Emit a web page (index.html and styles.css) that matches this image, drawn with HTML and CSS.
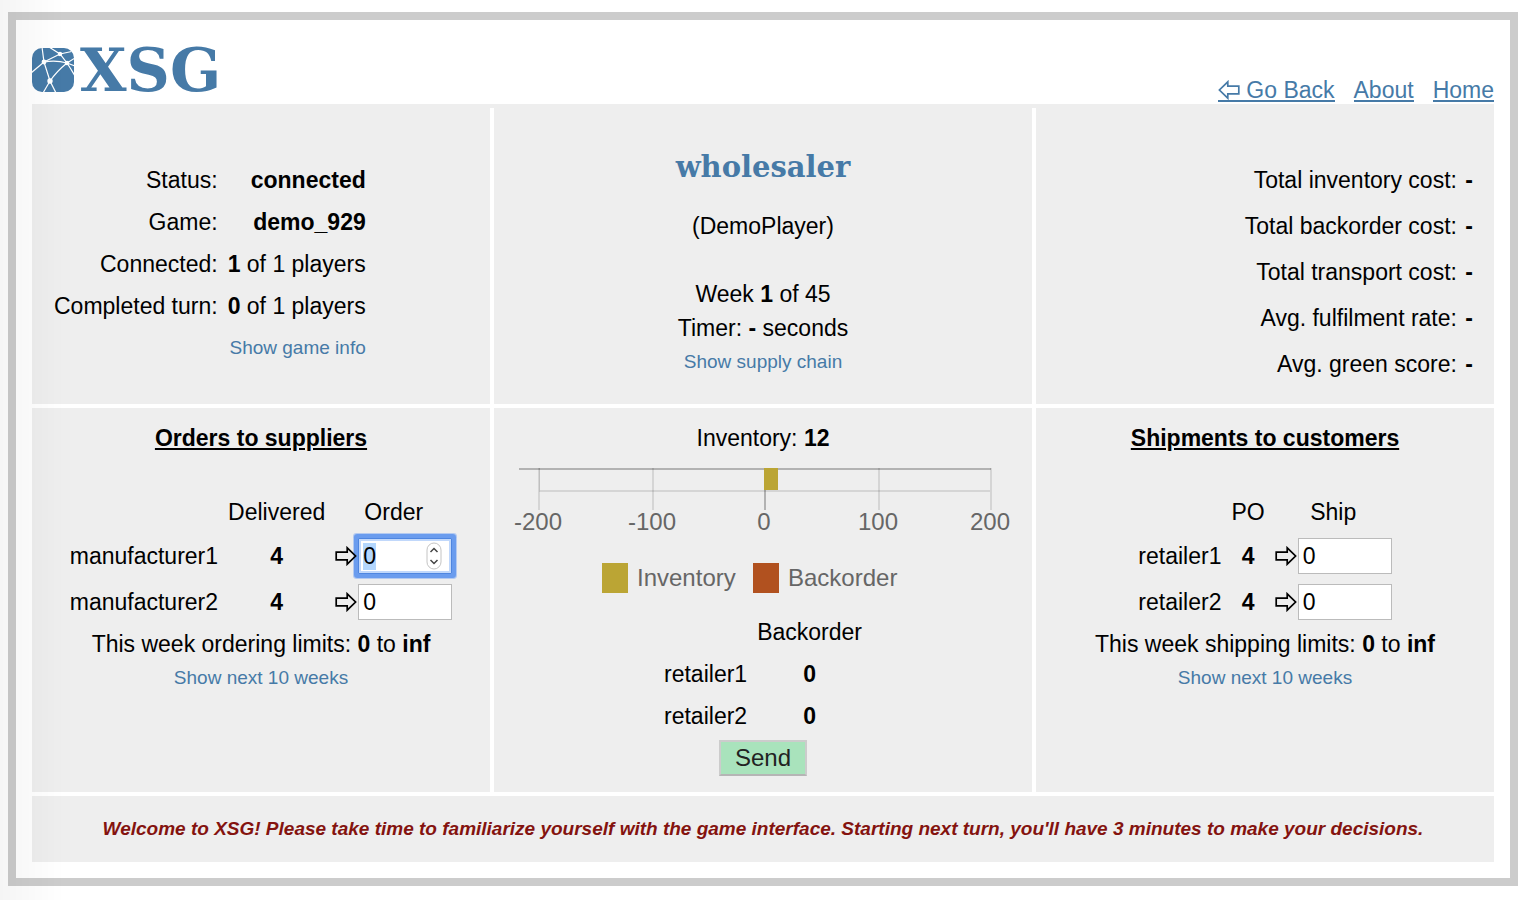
FILE: index.html
```html
<!DOCTYPE html>
<html lang="en">
<head>
<meta charset="utf-8">
<title>XSG</title>
<link rel="stylesheet" href="styles.css">
</head>
<body>
<svg class="defs" aria-hidden="true">
  <symbol id="arrow" viewBox="0 0 22 20"><path d="M1.2 6.2H12.2V1.8L20.6 10L12.2 18.2V13.8H1.2Z" fill="none" stroke="currentColor" stroke-width="1.7"/></symbol>
</svg>
<div class="frame">
  <header class="header">
    <a class="logo" href="#" aria-label="XSG">
      <svg class="logo-mark" viewBox="0 0 42 44" aria-hidden="true">
        <defs><clipPath id="mark"><rect width="42" height="44" rx="10"/></clipPath></defs>
        <g clip-path="url(#mark)">
          <rect width="42" height="44" fill="#467aa7"/>
          <g fill="none" stroke="#fff" stroke-width="1.2">
            <path d="M10 -1L12 14L18 33"/>
            <path d="M-1 25L12 14L28 6L42 3"/>
            <path d="M12 14Q24 12 35 15L43 18"/>
            <path d="M17 -1L28 6L35 15L43 10"/>
            <path d="M35 15Q25 23 18 33L11 45"/>
            <path d="M35 15Q39 21 43 28"/>
            <path d="M18 33L24 45"/>
          </g>
          <g fill="#fff"><circle cx="12" cy="14" r="2.4"/><circle cx="28" cy="6" r="2.2"/><circle cx="35" cy="15" r="2.3"/><circle cx="18" cy="33" r="2.7"/></g>
        </g>
      </svg>
      <span class="logo-text">XSG</span>
    </a>
    <nav class="nav">
      <a href="#"><svg class="arrow back" aria-hidden="true"><use href="#arrow"/></svg> Go Back</a>
      <a href="#">About</a>
      <a href="#">Home</a>
    </nav>
  </header>

  <main class="board">
    <section class="panel status">
      <table class="status-table">
        <tr><th>Status:</th><td><b>connected</b></td></tr>
        <tr><th>Game:</th><td><b>demo_929</b></td></tr>
        <tr><th>Connected:</th><td><b>1</b> of 1 players</td></tr>
        <tr><th>Completed turn:</th><td><b>0</b> of 1 players</td></tr>
        <tr><td></td><td><a class="more" href="#">Show game info</a></td></tr>
      </table>
    </section>

    <section class="panel role">
      <h1 class="role-name">wholesaler</h1>
      <p class="player">(DemoPlayer)</p>
      <p>Week <b>1</b> of 45</p>
      <p>Timer: <b>-</b> seconds</p>
      <p><a class="more" href="#">Show supply chain</a></p>
    </section>

    <section class="panel costs">
      <p>Total inventory cost: <b>-</b></p>
      <p>Total backorder cost: <b>-</b></p>
      <p>Total transport cost: <b>-</b></p>
      <p>Avg. fulfilment rate: <b>-</b></p>
      <p>Avg. green score: <b>-</b></p>
    </section>

    <section class="panel trade">
      <h2 class="title">Orders to suppliers</h2>
      <table class="trade-table">
        <tr class="head"><td></td><th>Delivered</th><th>Order</th></tr>
        <tr>
          <td><label for="m1">manufacturer1</label></td><td class="num">4</td>
          <td><div class="entry"><svg class="arrow" aria-hidden="true"><use href="#arrow"/></svg><span class="field"><input class="qty" id="m1" type="number" value="0" autofocus><svg class="stepper" viewBox="0 0 16 28" aria-hidden="true"><rect x="1" y="1" width="14" height="26" rx="7" fill="#fff" stroke="#c4c4c4"/><path d="M4.5 10L8 6.5L11.5 10M4.5 18L8 21.5L11.5 18" fill="none" stroke="#444" stroke-width="1.5"/></svg></span></div></td>
        </tr>
        <tr>
          <td><label for="m2">manufacturer2</label></td><td class="num">4</td>
          <td><div class="entry"><svg class="arrow" aria-hidden="true"><use href="#arrow"/></svg><input class="qty" id="m2" type="number" value="0"></div></td>
        </tr>
      </table>
      <p>This week ordering limits: <b>0</b> to <b>inf</b></p>
      <p><a class="more" href="#">Show next 10 weeks</a></p>
    </section>

    <section class="panel stock">
      <p>Inventory: <b>12</b></p>
      <svg class="chart" viewBox="0 0 538 156" role="img" aria-label="Inventory 12, backorder 0">
        <g fill="#000">
          <rect x="25" y="13" width="472" height="2" fill-opacity=".25"/>
          <rect x="46" y="35" width="450" height="2" fill-opacity=".1"/>
          <rect x="44" y="13" width="2" height="42" fill-opacity=".1"/>
          <rect x="45" y="13" width="1" height="24" fill-opacity=".1"/>
          <rect x="158" y="13" width="2" height="42" fill-opacity=".1"/>
          <rect x="270" y="13" width="2" height="42" fill-opacity=".25"/>
          <rect x="384" y="13" width="2" height="42" fill-opacity=".1"/>
          <rect x="496" y="13" width="2" height="42" fill-opacity=".1"/>
        </g>
        <rect x="270" y="13" width="14" height="22" fill="#bba534"/>
        <g class="chart-text" text-anchor="middle">
          <text x="44" y="75">-200</text><text x="158" y="75">-100</text><text x="270" y="75">0</text><text x="384" y="75">100</text><text x="496" y="75">200</text>
        </g>
        <rect x="108" y="108" width="26" height="30" fill="#bba534"/>
        <rect x="259" y="108" width="26" height="30" fill="#b1511f"/>
        <g class="chart-text"><text x="143" y="131">Inventory</text><text x="294" y="131">Backorder</text></g>
      </svg>
      <table class="backorder">
        <tr><td></td><th>Backorder</th></tr>
        <tr><td>retailer1</td><td class="num">0</td></tr>
        <tr><td>retailer2</td><td class="num">0</td></tr>
      </table>
      <button class="send" type="button">Send</button>
    </section>

    <section class="panel trade">
      <h2 class="title">Shipments to customers</h2>
      <table class="trade-table">
        <tr class="head"><td></td><th>PO</th><th>Ship</th></tr>
        <tr>
          <td><label for="r1">retailer1</label></td><td class="num">4</td>
          <td><div class="entry"><svg class="arrow" aria-hidden="true"><use href="#arrow"/></svg><input class="qty" id="r1" type="number" value="0"></div></td>
        </tr>
        <tr>
          <td><label for="r2">retailer2</label></td><td class="num">4</td>
          <td><div class="entry"><svg class="arrow" aria-hidden="true"><use href="#arrow"/></svg><input class="qty" id="r2" type="number" value="0"></div></td>
        </tr>
      </table>
      <p>This week shipping limits: <b>0</b> to <b>inf</b></p>
      <p><a class="more" href="#">Show next 10 weeks</a></p>
    </section>

    <p class="panel message">Welcome to XSG! Please take time to familiarize yourself with the game interface. Starting next turn, you'll have 3 minutes to make your decisions.</p>
  </main>
</div>
<script src="main.js"></script>
</body>
</html>
```
FILE: styles.css
```css
* { box-sizing: border-box; }

body {
  margin: 0;
  padding: 12px 8px;
  background: #fff;
  color: #000;
  font: 23px/34px "Liberation Sans", Arial, sans-serif;
}

/* soft shade along the left edge of the window */
body::after {
  content: "";
  position: fixed;
  inset: 0 auto 0 0;
  width: 64px;
  background: linear-gradient(to right, rgba(0, 0, 0, .04), rgba(0, 0, 0, 0));
  pointer-events: none;
}

p, h1, h2 { margin: 0; }
th { font-weight: normal; }
a { color: #467aa7; }
table { border-collapse: collapse; }
.defs { display: none; }

.frame {
  border: 8px solid #ccc;
  padding: 16px;
}

.header {
  display: flex;
  justify-content: space-between;
  align-items: flex-end;
  height: 68px;
}

.logo {
  display: flex;
  align-items: center;
  gap: 6px;
  padding-bottom: 3px;
  text-decoration: none;
}
.logo-mark { width: 42px; height: 44px; }
.logo-text { font: bold 60px/62px "DejaVu Serif", Georgia, serif; }

.nav {
  display: flex;
  gap: 19px;
  padding-bottom: 2px;
  line-height: 20px;
}
.nav a { border-bottom: 2px solid; text-decoration: none; }

.arrow { width: 22px; height: 20px; flex: none; }
.arrow.back { transform: rotate(180deg); vertical-align: bottom; }

.board {
  display: grid;
  grid-template-columns: 458fr 538fr 458fr;
  gap: 4px;
  border-top: 4px solid #eee;
}

.panel { background: #eee; }

.more { font-size: 19px; text-decoration: none; vertical-align: top; }

.status { padding: 51px 20px 16px; }
.status-table { text-align: right; line-height: 40px; }
.status-table th, .status-table td { padding: 1px 2px; }
.status-table td { padding-left: 8px; }
.status-table th { text-align: right; }

.role { padding: 41px 16px 24px; text-align: center; }
.role-name {
  color: #467aa7;
  font: bold 29px/36px "DejaVu Serif", Georgia, serif;
}
.player { margin: 24px 0 34px; }

.costs { padding: 49px 21px 17px; text-align: right; line-height: 46px; }
.costs b { margin-left: 2px; }

.trade { padding: 13px 16px 96px; text-align: center; }
.title { font-size: 23px; text-decoration: underline; }
.trade-table { margin: 36px auto 2px; }
.trade-table td, .trade-table th { padding: 0 5px; height: 46px; text-align: left; }
.trade-table .head td, .trade-table .head th { height: 42px; text-align: center; }
.trade-table .num, .backorder .num { font-weight: bold; text-align: center; }

.entry { display: flex; align-items: center; gap: 1px; }
.entry .arrow { z-index: 1; }
.field { position: relative; display: flex; }

.qty {
  width: 94px;
  height: 36px;
  margin: 0;
  padding: 0 4px;
  border: 1px solid #bbb;
  background: #fff;
  color: #000;
  font: inherit;
  appearance: textfield;
  outline: none;
}
.qty::-webkit-inner-spin-button { display: none; }
.qty::selection { background: #b3d6fd; color: #000; }
.qty:focus {
  border-color: #4f86e0;
  box-shadow: inset 0 0 0 2px #c1d8fb, 0 0 0 4px #6a9cee, 0 0 0 5px #b4caf0;
  border-radius: 1px;
}
.stepper { position: absolute; right: 10px; top: 4px; width: 16px; height: 28px; }

.stock {
  display: flex;
  flex-direction: column;
  align-items: center;
  padding: 13px 0 16px;
}
.chart { width: 100%; max-width: 538px; }
.chart-text { font-size: 24px; fill: #666; }

.backorder { line-height: 42px; }
.backorder td, .backorder th { padding: 0 5px; }

.send {
  margin-top: 3px;
  width: 88px;
  height: 36px;
  padding: 0;
  border: 2px solid #ccc;
  border-bottom-color: #b5b5b5;
  background: #a9e3bc;
  color: #222;
  font: 24px/28px "Liberation Sans", Arial, sans-serif;
}

.message {
  grid-column: 1 / -1;
  padding: 16px;
  color: #84130f;
  font-size: 19px;
  font-style: italic;
  font-weight: bold;
  text-align: center;
}
```
FILE: main.js
```js
const first = document.getElementById("m1");
first.focus();
first.select();
```
